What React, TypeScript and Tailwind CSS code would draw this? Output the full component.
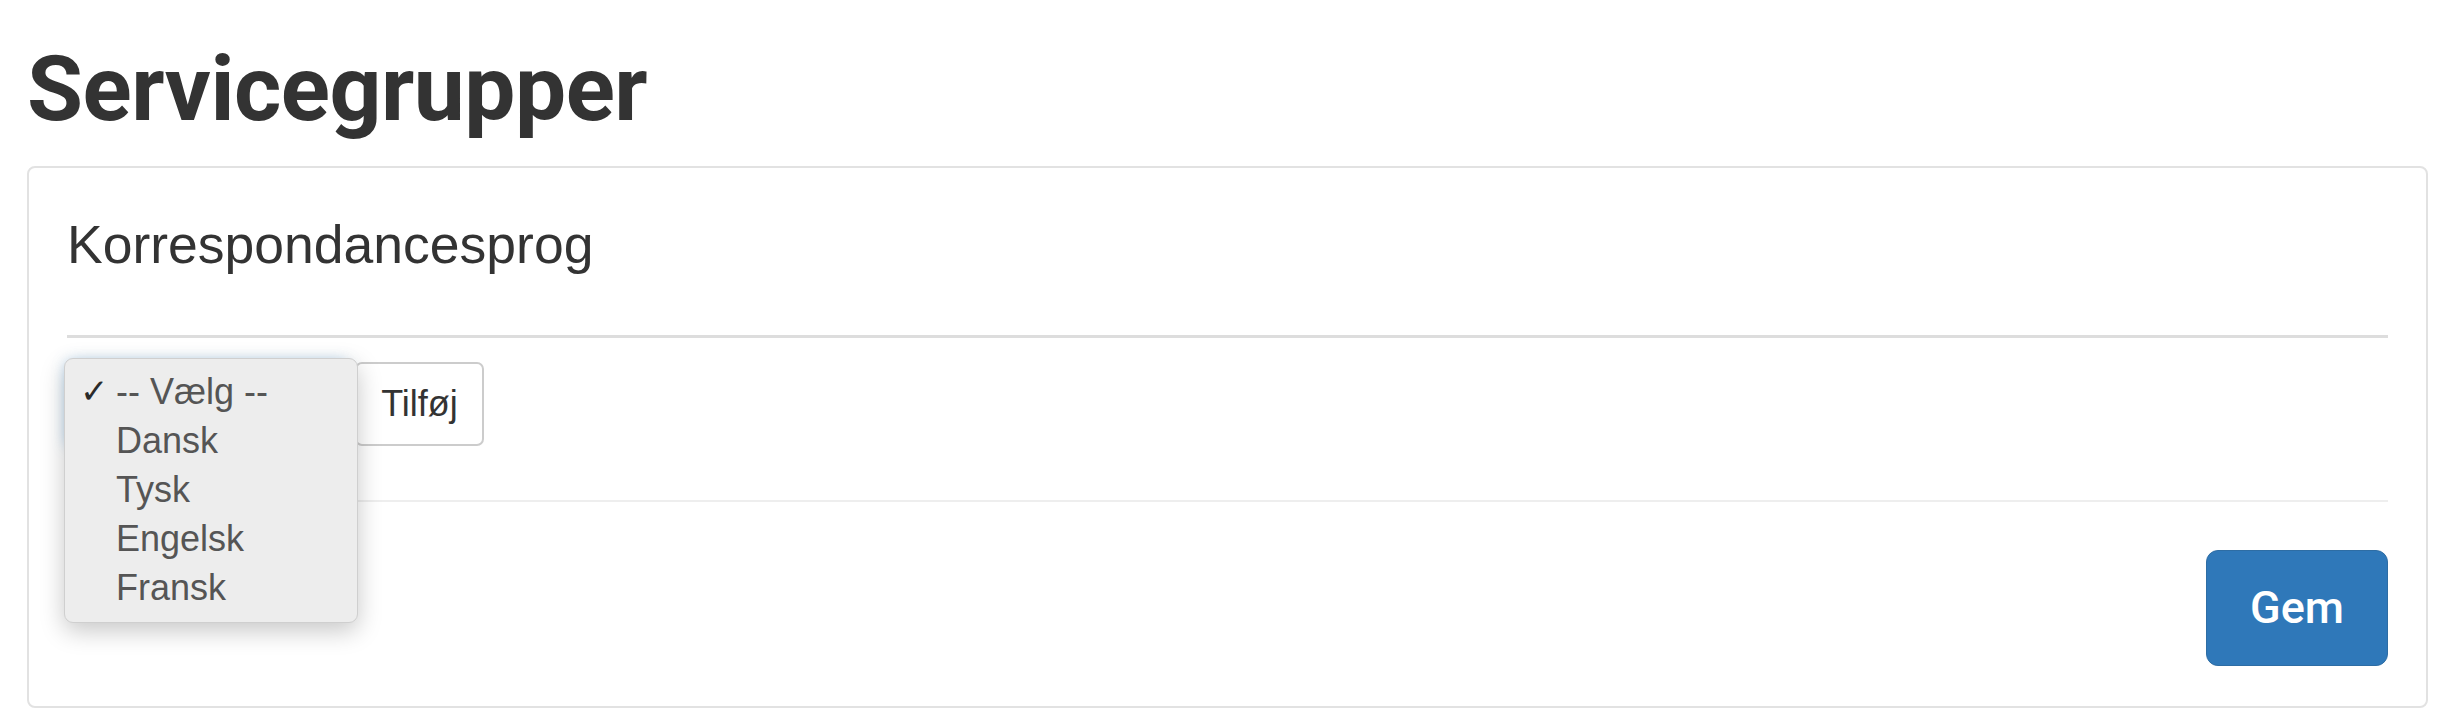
import React from 'react';

const languages = ['Dansk', 'Tysk', 'Engelsk', 'Fransk'];

export default function App() {
  return (
    <div className="min-h-screen bg-white pt-[43px] pl-[27px] pr-[30px] text-[#333]">
      <h1 className="font-['Roboto',sans-serif] font-bold text-[91px] leading-[93px] tracking-[-0.5px] mb-[30px]">
        Servicegrupper
      </h1>

      {/* Panel */}
      <div className="border-2 border-[#e2e2e2] rounded-[8px] bg-white px-[38px] pt-[48px] pb-[40px]">
        <h3 className="font-['Liberation_Sans',Arial,sans-serif] text-[53.5px] leading-[58px] text-[#333]">
          Korrespondancesprog
        </h3>

        <div className="mt-[61px] h-[3px] bg-[#dddddd]" />

        {/* Select + add button */}
        <div className="relative mt-[24px] flex items-center gap-[8px]">
          <div className="h-[84px] w-[280px] rounded-[6px] border-2 border-[#66afe9] bg-white shadow-[0_0_14px_rgba(102,175,233,0.6)]" />
          <button className="h-[84px] w-[129px] rounded-[7px] border-2 border-[#cccccc] bg-white font-['Liberation_Sans',Arial,sans-serif] text-[36px] text-[#333]">
            Tilføj
          </button>

          {/* Native select menu, open */}
          <div className="absolute left-[-3px] top-[-4px] w-[294px] h-[265px] rounded-[9px] border border-[#cfcfcf] bg-[#ededed] pt-[8px] shadow-[0_8px_24px_rgba(0,0,0,0.22)] font-['Liberation_Sans',Arial,sans-serif] text-[36px] leading-[49px] text-[#555]">
            <div className="relative pl-[51px]">
              <span className="absolute left-[15px] top-0 font-['DejaVu_Sans',sans-serif] font-bold text-[34px] text-[#2a2a2a]">✓</span>
              -- Vælg --
            </div>
            {languages.map((lang) => (
              <div key={lang} className="pl-[51px]">
                {lang}
              </div>
            ))}
          </div>
        </div>

        <div className="mt-[54px] h-[2px] bg-[#eeeeee]" />

        <div className="mt-[48px] flex justify-end">
          <button className="h-[116px] w-[182px] rounded-[12px] bg-[#2f78b9] border border-[#2e6da4] font-['Roboto',sans-serif] font-medium text-[45px] text-white">
            Gem
          </button>
        </div>
      </div>
    </div>
  );
}
